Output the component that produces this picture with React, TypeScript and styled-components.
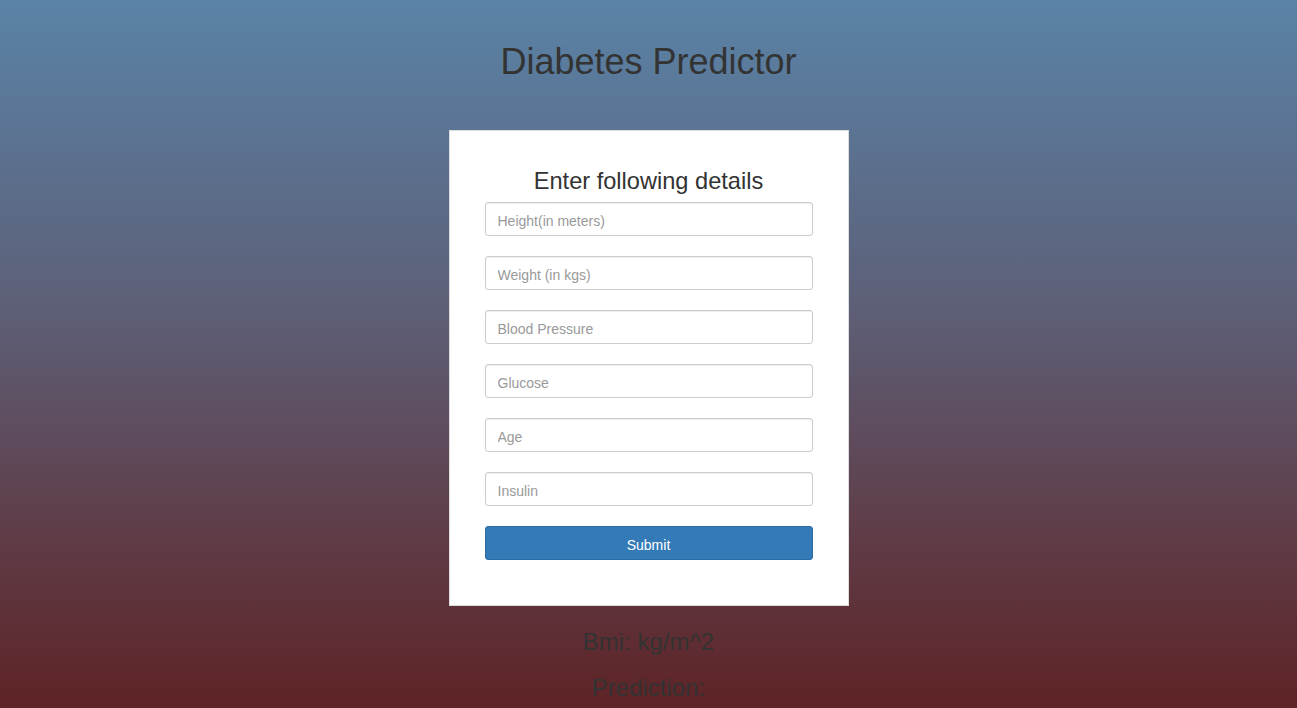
import React from "react";
import styled, { createGlobalStyle } from "styled-components";

const Global = createGlobalStyle`
  html, body { margin: 0; padding: 0; }
  body {
    font-family: "Liberation Sans", Arial, sans-serif;
    color: #333;
    min-height: 708px;
    background: linear-gradient(to bottom, #5a83a7 0%, #5d5e75 45%, #5f3d48 75%, #5e2325 100%);
    background-attachment: fixed;
  }
`;

const Page = styled.div`
  display: flex;
  flex-direction: column;
  align-items: center;
  height: 708px;
  overflow: hidden;
`;

const Title = styled.h1`
  margin: 42px 0 0;
  font-size: 36px;
  font-weight: 400;
  line-height: 40px;
  color: #333;
`;

const Card = styled.form`
  margin-top: 48px;
  width: 400px;
  box-sizing: border-box;
  background: #fff;
  border: 1px solid #ddd;
  padding: 37px 35px 45px;
  display: flex;
  flex-direction: column;
`;

const CardHeading = styled.h3`
  margin: 0 0 8px;
  font-size: 23.6px;
  font-weight: 400;
  line-height: 26px;
  text-align: center;
  color: #333;
`;

const Fields = styled.div`
  display: flex;
  flex-direction: column;
  gap: 20px;
`;

const Input = styled.input`
  box-sizing: border-box;
  height: 34px;
  width: 100%;
  padding: 9px 12px 5px;
  font-family: "Liberation Sans", Arial, sans-serif;
  font-size: 14px;
  color: #555;
  border: 1px solid #ccc;
  border-radius: 3px;
  box-shadow: inset 0 1px 1px rgba(0,0,0,0.075);
  outline: none;
  &::placeholder { color: #999; }
`;

const Button = styled.button`
  box-sizing: border-box;
  height: 34px;
  width: 100%;
  padding: 4px 12px 0;
  font-family: "Liberation Sans", Arial, sans-serif;
  font-size: 14px;
  color: #fff;
  background: #337ab7;
  border: 1px solid #2e6da4;
  border-radius: 3px;
`;

const Result = styled.p`
  margin: 0;
  font-size: 24px;
  line-height: 26px;
  color: #333;
`;

const Results = styled.div`
  margin-top: 23px;
  display: flex;
  flex-direction: column;
  align-items: center;
  gap: 20px;
`;

const fields = [
  "Height(in meters)",
  "Weight (in kgs)",
  "Blood Pressure",
  "Glucose",
  "Age",
  "Insulin",
];

export default function App() {
  return (
    <>
      <Global />
      <Page>
        <Title>Diabetes Predictor</Title>
        <Card onSubmit={(e) => e.preventDefault()}>
          <CardHeading>Enter following details</CardHeading>
          <Fields>
            {fields.map((f) => (
              <Input key={f} placeholder={f} />
            ))}
            <Button type="submit">Submit</Button>
          </Fields>
        </Card>
        <Results>
          <Result>Bmi: kg/m^2</Result>
          <Result>Prediction:</Result>
        </Results>
      </Page>
    </>
  );
}
